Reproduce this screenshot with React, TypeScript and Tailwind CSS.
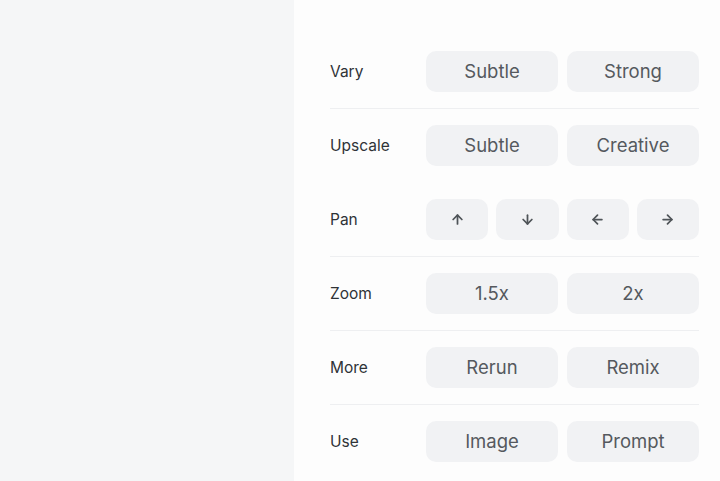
import React from 'react';
import { ArrowUp, ArrowDown, ArrowLeft, ArrowRight } from 'lucide-react';

type Row = {
  label: string;
  options?: string[];
  icons?: boolean;
  divider: boolean;
};

const rows: Row[] = [
  { label: 'Vary', options: ['Subtle', 'Strong'], divider: true },
  { label: 'Upscale', options: ['Subtle', 'Creative'], divider: false },
  { label: 'Pan', icons: true, divider: true },
  { label: 'Zoom', options: ['1.5x', '2x'], divider: true },
  { label: 'More', options: ['Rerun', 'Remix'], divider: true },
  { label: 'Use', options: ['Image', 'Prompt'], divider: false },
];

const panIcons = [ArrowUp, ArrowDown, ArrowLeft, ArrowRight];

export default function App() {
  return (
    <div
      className="flex h-[481px] w-[720px] overflow-hidden"
      style={{ fontFamily: 'Inter, "Noto Sans", sans-serif' }}
    >
      <div className="w-[294px] shrink-0 bg-[#f5f6f7]" />
      <div className="flex-1 bg-[#fdfdfd] pl-9 pr-[21px] pt-[35px]">
        {rows.map((row) => (
          <div
            key={row.label}
            className={`flex h-[74px] items-center border-b ${
              row.divider ? 'border-[#eeeff1]' : 'border-transparent'
            }`}
          >
            <div className="w-24 shrink-0 text-[15.5px] font-normal text-[#2f3337]">
              {row.label}
            </div>
            {row.icons ? (
              <div className="grid w-[273px] grid-cols-4 gap-2">
                {panIcons.map((Icon, i) => (
                  <button
                    key={i}
                    className="flex h-[41px] items-center justify-center rounded-[10px] bg-[#f1f2f4] text-[#4f5458]"
                  >
                    <Icon size={15} strokeWidth={2.8} />
                  </button>
                ))}
              </div>
            ) : (
              <div className="flex gap-[9px]">
                {row.options!.map((opt) => (
                  <button
                    key={opt}
                    className="flex h-[41px] w-[132px] items-center justify-center rounded-[10px] bg-[#f1f2f4] text-[18.5px] text-[#55595e]"
                  >
                    {opt}
                  </button>
                ))}
              </div>
            )}
          </div>
        ))}
      </div>
    </div>
  );
}
